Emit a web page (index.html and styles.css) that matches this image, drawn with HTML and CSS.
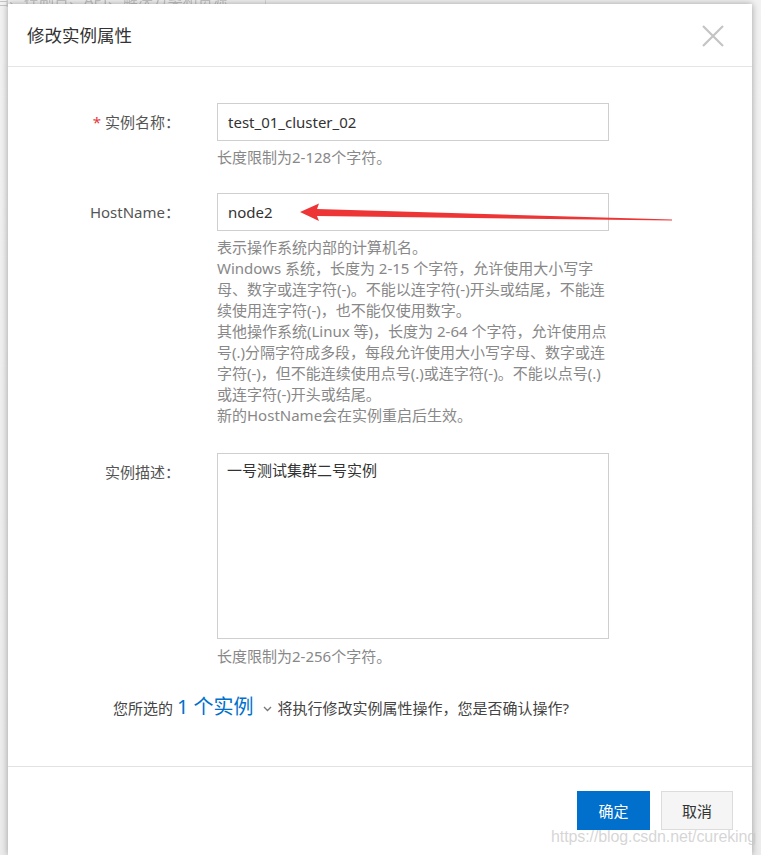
FILE: index.html
```html
<!DOCTYPE html>
<html lang="zh-CN">
<head>
<meta charset="utf-8">
<title>修改实例属性</title>
<link rel="stylesheet" href="styles.css">
</head>
<body>
<div class="page">
  <div class="bg-text">档、控制台、API、解决方案和资源</div>
  <div class="bg-rule"></div>
</div>

<div class="modal">
  <div class="modal-header">
    <h2 class="title">修改实例属性</h2>
    <button class="close" aria-label="关闭">
      <svg width="22" height="22" viewBox="0 0 22 22"><path d="M1 1 L21 21 M21 1 L1 21" stroke="#c4c4c4" stroke-width="2.2" fill="none"/></svg>
    </button>
  </div>

  <div class="modal-body">
    <div class="form-row row-name">
      <label class="label"><span class="req">*</span> 实例名称：</label>
      <div class="field">
        <input class="input" type="text" value="test_01_cluster_02" spellcheck="false">
        <div class="hint">长度限制为2-128个字符。</div>
      </div>
    </div>

    <div class="form-row row-host">
      <label class="label">HostName：</label>
      <div class="field">
        <input class="input" type="text" value="node2" spellcheck="false">
        <div class="hint">表示操作系统内部的计算机名。<br>Windows 系统，长度为 2-15 个字符，允许使用大小写字<br>母、数字或连字符(-)。不能以连字符(-)开头或结尾，不能连<br>续使用连字符(-)，也不能仅使用数字。<br>其他操作系统(Linux 等)，长度为 2-64 个字符，允许使用点<br>号(.)分隔字符成多段，每段允许使用大小写字母、数字或连<br>字符(-)，但不能连续使用点号(.)或连字符(-)。不能以点号(.)<br>或连字符(-)开头或结尾。<br>新的HostName会在实例重启后生效。</div>
      </div>
    </div>

    <div class="form-row row-desc">
      <label class="label">实例描述：</label>
      <div class="field">
        <textarea class="textarea" spellcheck="false">一号测试集群二号实例</textarea>
        <div class="hint">长度限制为2-256个字符。</div>
      </div>
    </div>

    <p class="confirm">您所选的 <span class="count">1 个实例</span><svg class="chev" width="9" height="6" viewBox="0 0 9 6"><path d="M1 1 L4.5 4.5 L8 1" stroke="#777" stroke-width="1.3" fill="none"/></svg>将执行修改实例属性操作，您是否确认操作?</p>
  </div>

  <div class="modal-footer">
    <button class="btn btn-primary">确定</button>
    <button class="btn btn-default">取消</button>
  </div>
</div>

<svg class="arrow" width="761" height="855" viewBox="0 0 761 855">
  <polygon points="300,212 319,203.5 317,209 672,219.5 672,220.5 317,216 319,221" fill="#ee3535"/>
</svg>

<div class="watermark">https://blog.csdn.net/cureking</div>
</body>
</html>
```

FILE: styles.css
```css
html, body {
  margin: 0;
  padding: 0;
}
body {
  width: 761px;
  height: 855px;
  overflow: hidden;
  position: relative;
  background: #e4e4e4;
  font-family: "Noto Sans", "Noto Sans CJK SC", sans-serif;
}

.page {
  height: 855px;
  background: linear-gradient(#f2f2f2, #ececec);
}
.bg-text {
  position: absolute;
  left: -6px;
  top: -12px;
  font-size: 15px;
  color: #c4c4c4;
  filter: blur(0.6px);
  white-space: nowrap;
}
.bg-rule {
  position: absolute;
  left: 265px;
  top: 0;
  width: 1px;
  height: 4px;
  background: #d8d8d8;
}

.modal {
  position: absolute;
  left: 8px;
  top: 4px;
  width: 744px;
  height: 851px;
  background: #fff;
  box-shadow: 0 0 7px rgba(0, 0, 0, 0.35);
  display: flex;
  flex-direction: column;
}

.modal-header {
  height: 62px;
  border-bottom: 1px solid #e5e5e5;
  display: flex;
  align-items: center;
  justify-content: space-between;
  padding: 0 28px 0 19px;
}
.title {
  margin: 0;
  font-size: 17.5px;
  font-weight: normal;
  color: #333;
  line-height: 24px;
  font-family: "Noto Sans CJK SC", sans-serif;
}
.close {
  border: 0;
  background: none;
  padding: 0;
  width: 22px;
  height: 22px;
  display: flex;
  margin-top: 1px;
}

.modal-body {
  padding-top: 36px;
}

.form-row {
  display: grid;
  grid-template-columns: 172px 392px;
  column-gap: 37px;
}
.row-name {
  margin-bottom: 25px;
}
.row-host {
  margin-bottom: 27px;
}
.label {
  text-align: right;
  font-size: 15px;
  line-height: 38px;
  color: #555;
  white-space: nowrap;
}
.req {
  color: #e4393c;
}
.field {
  display: flex;
  flex-direction: column;
}
.input {
  box-sizing: border-box;
  width: 392px;
  height: 38px;
  margin: 0;
  border: 1px solid #cfcfcf;
  padding: 0 10px;
  font: inherit;
  font-size: 15px;
  color: #333;
  outline: none;
}
.textarea {
  box-sizing: border-box;
  width: 392px;
  height: 186px;
  margin: 0;
  border: 1px solid #cfcfcf;
  padding: 6px 9px;
  font: inherit;
  font-size: 15px;
  line-height: 21px;
  color: #333;
  resize: none;
  outline: none;
}
.hint {
  margin-top: 6px;
  font-size: 15px;
  line-height: 21px;
  color: #888;
  white-space: nowrap;
}
.row-desc .hint {
  margin-top: 7px;
}

.confirm {
  margin: 26px 0 0;
  padding-left: 105px;
  font-size: 15px;
  line-height: 28px;
  color: #444;
  white-space: nowrap;
}
.count {
  font-size: 20px;
  color: #0070cc;
}
.chev {
  margin: 0 6px 2px 9px;
  vertical-align: middle;
}

.modal-footer {
  margin-top: 44px;
  border-top: 1px solid #e2e2e2;
  padding: 24px 19px 0 0;
  display: flex;
  justify-content: flex-end;
  gap: 11px;
}
.btn {
  box-sizing: border-box;
  height: 39px;
  padding: 0;
  font-family: "Noto Sans CJK SC", sans-serif;
  font-size: 15px;
  cursor: pointer;
}
.btn-primary {
  width: 73px;
  background: #0070cc;
  border: 1px solid #0070cc;
  color: #fff;
}
.btn-default {
  width: 72px;
  background: #f5f5f5;
  border: 1px solid #dcdcdc;
  color: #333;
}

.arrow {
  position: absolute;
  left: 0;
  top: 0;
  pointer-events: none;
}

.watermark {
  position: absolute;
  left: 551px;
  top: 828px;
  font-family: "Liberation Sans", Arial, sans-serif;
  font-size: 16px;
  color: rgba(200, 200, 200, 0.75);
  white-space: nowrap;
  letter-spacing: -0.1px;
}
```
